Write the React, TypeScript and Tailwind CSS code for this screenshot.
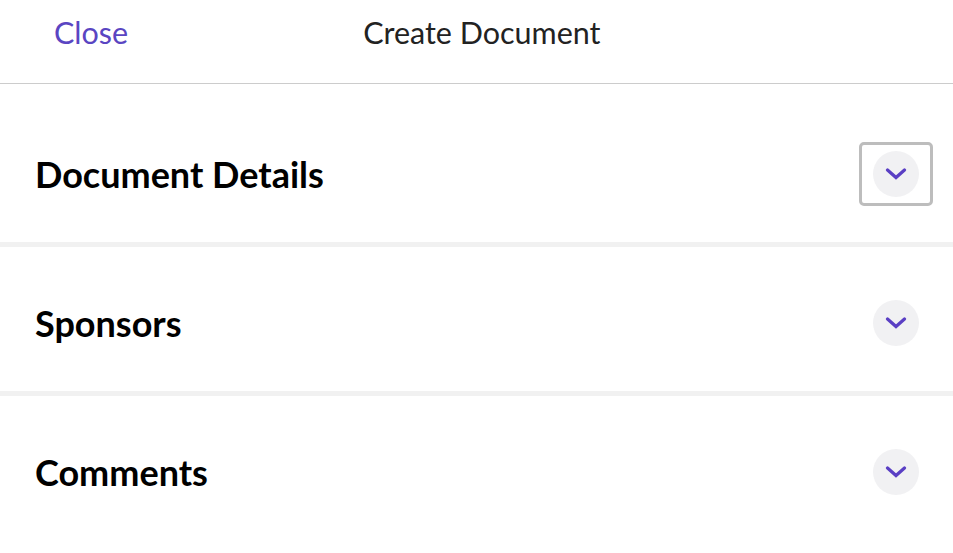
const SECTIONS = [
  { title: "Document Details", focused: true },
  { title: "Sponsors", focused: false },
  { title: "Comments", focused: false },
];

function Chevron() {
  return (
    <svg width="22" height="12" viewBox="0 0 22 12" fill="none">
      <path d="M2.5 2 L11 9.5 L19.5 2" stroke="#5a3fc4" strokeWidth="3.2" strokeLinecap="round" strokeLinejoin="miter" />
    </svg>
  );
}

function Section({ title, focused, first }: { title: string; focused: boolean; first: boolean }) {
  return (
    <section className={`flex items-center justify-between pl-[35px] pr-5 pb-9 ${first ? "pt-[58px]" : "pt-11"}`}>
      <h2 className="text-[36px] font-bold text-black leading-none">{title}</h2>
      <button
        className={`w-[74px] h-[64px] flex items-center justify-center rounded-[5px] border-[3px] ${
          focused ? "border-[#bdbdbd]" : "border-transparent"
        }`}
      >
        <span className="w-[46px] h-[46px] rounded-full bg-[#f1f1f3] flex items-center justify-center">
          <Chevron />
        </span>
      </button>
    </section>
  );
}

export default function App() {
  return (
    <div className="w-[953px] h-[553px] bg-white overflow-hidden" style={{ fontFamily: "Lato, 'Noto Sans', sans-serif" }}>
      {/* Header */}
      <header className="h-[84px] border-b border-[#cccccc] flex items-start pt-[13px] pl-[54px]">
        <button className="text-[30.5px] text-[#5a45c2] leading-[38px]">Close</button>
        <h1 className="ml-[235px] text-[30.5px] text-[#222] leading-[38px]">Create Document</h1>
      </header>

      {SECTIONS.map((s, i) => (
        <div key={s.title}>
          {i > 0 && <div className="h-[5px] bg-[#f1f1f1]" />}
          <Section title={s.title} focused={s.focused} first={i === 0} />
        </div>
      ))}
    </div>
  );
}
